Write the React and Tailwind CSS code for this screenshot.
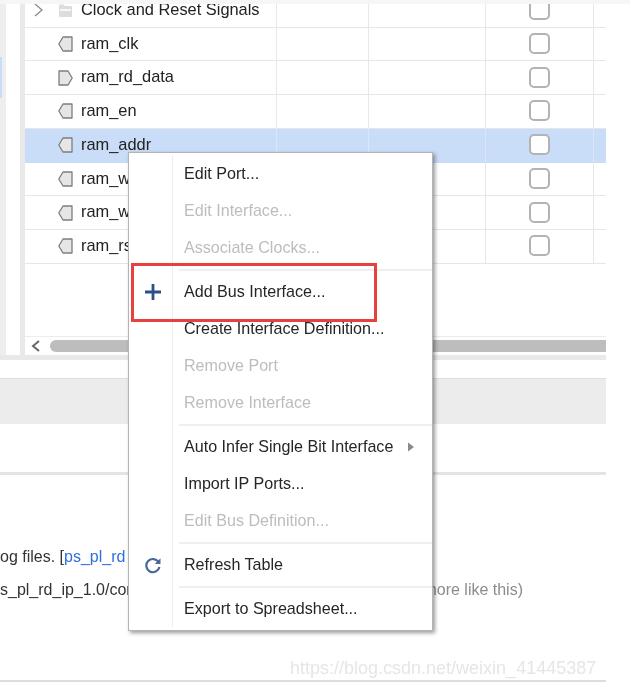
const rows = [
  { name: "Clock and Reset Signals", kind: "folder" },
  { name: "ram_clk", kind: "in" },
  { name: "ram_rd_data", kind: "out" },
  { name: "ram_en", kind: "in" },
  { name: "ram_addr", kind: "in", selected: true },
  { name: "ram_wr_en", kind: "in" },
  { name: "ram_wr_data", kind: "in" },
  { name: "ram_rst", kind: "in" },
];

function PortIcon({ kind }) {
  if (kind === "folder") {
    return (
      <svg width="15" height="15" viewBox="0 0 15 15" className="shrink-0">
        <path d="M1 3 V13 a1 1 0 0 0 1 1 H13 a1 1 0 0 0 1-1 V4 a1 1 0 0 0-1-1 H7 L5.5 1.5 H2 a1 1 0 0 0-1 1.5 Z" fill="#dcdcdc" />
        <path d="M2 6 H13 V8 H2 Z" fill="#f7f7f7" />
      </svg>
    );
  }
  const d = kind === "in" ? "M14 1 H5 L0.8 8 L5 15 H14 Z" : "M1 1 H10 L14.2 8 L10 15 H1 Z";
  return (
    <svg width="15" height="16" viewBox="0 0 15 16" className="shrink-0">
      <path d={d} fill="#e6e6e6" stroke="#7d7d7d" strokeWidth="1.3" strokeLinejoin="round" />
    </svg>
  );
}

function Row({ row, first }) {
  const bg = row.selected ? "bg-[#c9dcf8] border-[#c9dcf8]" : "bg-white border-[#e6e6e6]";
  const cellLine = row.selected ? "border-[#dbe6f8]" : "border-[#e8e8e8]";
  return (
    <div className={`grid grid-cols-[252px_92px_117px_108px_12px] h-[33.75px] border-b ${bg} ${first ? "-mt-[6.25px]" : ""}`}>
      <div className={`flex items-center border-r ${cellLine} relative pl-[33px]`}>
        <PortIcon kind={row.kind} />
        <span className="ml-[8px] mb-[2px] text-[16.4px] text-[#222]">{row.name}</span>
        {row.kind === "folder" && (
          <svg width="11" height="14" viewBox="0 0 11 14" className="absolute left-[8px] top-[9px]">
            <path d="M2 1 L9 7 L2 13" fill="none" stroke="#8a8a8a" strokeWidth="1.3" />
          </svg>
        )}
      </div>
      <div className={`border-r ${cellLine}`} />
      <div className={`border-r ${cellLine}`} />
      <div className={`flex items-center justify-center border-r ${cellLine}`}>
        <div className="w-[21px] h-[21px] mb-[1px] rounded-[5px] border-2 border-[#b3b3b3] bg-white" />
      </div>
      <div />
    </div>
  );
}

function Item({ label, disabled, icon, arrow }) {
  return (
    <div className="flex items-center h-[37px]">
      <div className="w-[44px] h-full flex items-center justify-center pl-[4px] border-r border-[#efefef] shrink-0">{icon}</div>
      <span className={`ml-[11px] text-[16.1px] whitespace-nowrap ${disabled ? "text-[#bdbdbd]" : "text-[#262626]"}`}>{label}</span>
      {arrow && (
        <svg width="8" height="10" viewBox="0 0 8 10" className="ml-[14px]">
          <path d="M1 0.5 L7 5 L1 9.5 Z" fill="#8a8a8a" />
        </svg>
      )}
    </div>
  );
}

function Sep() {
  return (
    <div className="h-[7px] flex items-center">
      <div className="w-[44px] h-full border-r border-[#efefef] shrink-0" />
      <div className="ml-[6px] flex-1 h-[2px] bg-[#efefef]" />
    </div>
  );
}

const Plus = (
  <svg width="18" height="18" viewBox="0 0 18 18">
    <path d="M9 1 V17 M1 9 H17" stroke="#2f4f86" strokeWidth="2.8" />
  </svg>
);

const Refresh = (
  <svg width="18" height="18" viewBox="0 0 18 18">
    <path d="M14.6 6.2 A6.6 6.6 0 1 0 15.4 11" fill="none" stroke="#46689c" strokeWidth="2.2" />
    <path d="M16.5 2.2 V8 H10.8 Z" fill="#46689c" />
  </svg>
);

export default function App() {
  return (
    <div className="relative w-[630px] h-[687px] overflow-hidden bg-white font-['Liberation_Sans',Arial,sans-serif] blur-[0.5px]">
      <div className="absolute left-0 top-0 w-full h-[4px] bg-[#f6f6f6] z-10" />

      <div className="w-[606px] flex flex-col">
        <div className="flex h-[355px]">
          <div className="relative w-[6px] h-full bg-[#eeeeee] shrink-0">
            <div className="absolute left-0 top-[57px] w-[2px] h-[41px] bg-[#c9dcf8]" />
          </div>
          <div className="w-[14px] shrink-0" />
          <div className="w-[5px] bg-[#e9e9e9] shrink-0" />
          <div className="flex-1 flex flex-col overflow-hidden">
            <div className="flex-1 overflow-hidden">
              {rows.map((r, i) => (
                <Row key={r.name} row={r} first={i === 0} />
              ))}
            </div>
            <div className="flex items-center h-[19px] border-t border-[#ececec]">
              <svg width="12" height="14" viewBox="0 0 12 14" className="ml-[5px] shrink-0">
                <path d="M9 2 L3 7 L9 12" fill="none" stroke="#666" strokeWidth="2" />
              </svg>
              <div className="ml-[8px] flex-1 h-[12px] rounded-l-[6px] bg-[#bdbdbd]" />
            </div>
          </div>
        </div>

        <div className="h-[5px] bg-[#e9e9e9]" />
        <div className="h-[18px]" />
        <div className="h-[46px] bg-[#ececec] border-t border-[#dedede]" />
        <div className="h-[48px]" />
        <div className="h-[3px] bg-[#e4e4e4]" />

        <div className="h-[210px] relative overflow-hidden">
          <div className="mt-[72px] text-[16px] text-[#333] whitespace-nowrap h-[20px] leading-[20px]">
            og files. [<span className="text-[#2f6fdc]">ps_pl_rd</span>
          </div>
          <div className="mt-[13px] w-[523px] flex justify-between text-[16px] whitespace-nowrap h-[20px] leading-[20px]">
            <span className="text-[#333]">s_pl_rd_ip_1.0/cor</span>
            <span className="text-[#8c8c8c]">(more like this)</span>
          </div>
          <div className="absolute left-0 right-0 bottom-[3px] h-[2px] bg-[#dddddd]" />
        </div>
      </div>

      <div className="absolute left-[128px] top-[152px] w-[305px] h-[479px] bg-white border border-[#b4b4b4] shadow-[2px_2px_4px_rgba(0,0,0,0.4)] py-[2px]">
        <Item label="Edit Port..." />
        <Item label="Edit Interface..." disabled />
        <Item label="Associate Clocks..." disabled />
        <Sep />
        <Item label="Add Bus Interface..." icon={Plus} />
        <Item label="Create Interface Definition..." />
        <Item label="Remove Port" disabled />
        <Item label="Remove Interface" disabled />
        <Sep />
        <Item label="Auto Infer Single Bit Interface" arrow />
        <Item label="Import IP Ports..." />
        <Item label="Edit Bus Definition..." disabled />
        <Sep />
        <Item label="Refresh Table" icon={Refresh} />
        <Sep />
        <Item label="Export to Spreadsheet..." />
      </div>

      <div className="absolute left-[131px] top-[263px] w-[246px] h-[59px] border-[3px] border-[#e8403f]" />

      <div className="absolute left-[290px] top-[655px] text-[18px] text-[#e6e6e6] whitespace-nowrap">
        https://blog.csdn.net/weixin_41445387
      </div>
    </div>
  );
}
